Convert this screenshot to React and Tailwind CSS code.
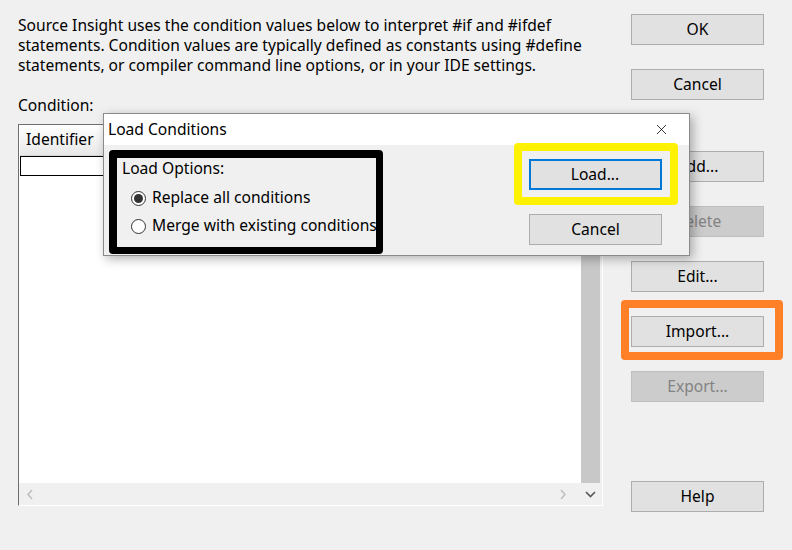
import { X } from 'lucide-react'

const Btn = ({ children, disabled, focused, className = '' }) => (
  <div
    className={
      'h-[31px] w-[133px] flex items-center justify-center border leading-none ' +
      (disabled
        ? 'bg-[#cccccc] border-[#bfbfbf] text-[#838383] '
        : focused
          ? 'bg-[#e1e1e1] border-2 border-[#0078d7] text-black '
          : 'bg-[#e1e1e1] border-[#adadad] text-black ') +
      className
    }
  >
    <span>{children}</span>
  </div>
)

const Radio = ({ checked, label }) => (
  <div className="flex items-center h-[20px] pl-[14px]">
    <div className="w-[15px] h-[15px] shrink-0 rounded-full border border-[#333] bg-white flex items-center justify-center">
      {checked && <div className="w-[9px] h-[9px] rounded-full bg-[#333]" />}
    </div>
    <span className="ml-[6px] whitespace-nowrap">{label}</span>
  </div>
)

const LoadDialog = () => (
  <div className="absolute left-[103px] top-[113px] w-[587px] h-[143px] border border-[#8a8a8a] bg-[#f0f0f0] shadow-[3px_3px_10px_rgba(0,0,0,0.3)] flex flex-col">
    <div className="h-[31px] bg-white flex items-center justify-between pl-[4px] pr-[19px]">
      <span>Load Conditions</span>
      <X size={17} strokeWidth={1.1} className="text-black" />
    </div>
    <div className="flex-1 flex relative">
      <div className="ml-[5px] mt-[5px] mb-[1px] w-[274px] border-[7px] border-l-[8px] border-t-[8px] border-black rounded-[4px] bg-[#f0f0f0] overflow-hidden">
        <div className="pl-[5px] leading-[20px]">Load Options:</div>
        <div className="mt-[10px]">
          <Radio checked label="Replace all conditions" />
        </div>
        <div className="mt-[8px]">
          <Radio label="Merge with existing conditions" />
        </div>
      </div>
      <div className="ml-auto mr-[11px] -mt-[2px] flex flex-col items-center w-[165px]">
        <div className="border-[8px] border-[#fff200] rounded-[4px] pl-[7px] pr-[8px] pt-[8px] pb-[7px] bg-[#f0f0f0]">
          <Btn focused>Load...</Btn>
        </div>
        <Btn className="mt-[9px]">Cancel</Btn>
      </div>
    </div>
  </div>
)

const ListBox = () => (
  <div className="mt-[9px] w-[585px] h-[382px] border-l border-t border-[#6e6e6e] border-r border-b border-r-white border-b-white flex flex-col">
    <div className="flex-1 flex min-h-0">
      <div className="flex-1 bg-white flex flex-col pl-[1px]">
        <div className="h-[31px] bg-gradient-to-b from-white to-[#e8e8e8] border-b border-[#d5d5d5] flex items-center pl-[6px]">
          <span>Identifier</span>
        </div>
        <div className="h-[20px] border border-black" />
      </div>
      <div className="w-[19px] bg-[#c8c8c8] mr-[2px]" />
    </div>
    <div className="h-[22px] flex">
      <div className="flex-1 bg-[#f0f0f0] flex items-center justify-between pl-[6px] pr-[13px] ml-[1px]">
        <svg width="8" height="11" viewBox="0 0 8 11">
          <path d="M6 1 L2 5.5 L6 10" fill="none" stroke="#c0c0c0" strokeWidth="1.6" />
        </svg>
        <svg width="8" height="11" viewBox="0 0 8 11">
          <path d="M2 1 L6 5.5 L2 10" fill="none" stroke="#c0c0c0" strokeWidth="1.6" />
        </svg>
      </div>
      <div className="w-[19px] bg-[#f0f0f0] ml-[1px] mr-[2px] flex items-center justify-center">
        <svg width="11" height="7" viewBox="0 0 11 7">
          <path d="M1 1 L5.5 5.5 L10 1" fill="none" stroke="#5a5a5a" strokeWidth="1.7" />
        </svg>
      </div>
    </div>
  </div>
)

export default function App() {
  return (
    <div className="w-[792px] h-[550px] bg-[#f0f0f0] relative overflow-hidden font-['Noto_Sans',sans-serif] text-[15.6px] text-black">
      <div className="flex">
        <div className="pl-[18px] pt-[15px] w-[613px]">
          <p className="leading-[20px] whitespace-nowrap">
            Source Insight uses the condition values below to interpret #if and #ifdef
            <br />
            statements. Condition values are typically defined as constants using #define
            <br />
            statements, or compiler command line options, or in your IDE settings.
          </p>
          <div className="mt-[20px] leading-[20px]">Condition:</div>
          <ListBox />
        </div>
        <div className="ml-[18px] pt-[14px] flex flex-col">
          <Btn>OK</Btn>
          <Btn className="mt-[24px]">Cancel</Btn>
          <Btn className="mt-[51px]">Add...</Btn>
          <Btn disabled className="mt-[24px]">Delete</Btn>
          <Btn className="mt-[24px]">Edit...</Btn>
          <Btn className="mt-[24px]">Import...</Btn>
          <Btn disabled className="mt-[24px]">Export...</Btn>
          <Btn className="mt-[79px]">Help</Btn>
        </div>
      </div>
      <div className="absolute left-[621px] top-[300px] w-[162px] h-[60px] border-[8px] border-[#ff8027] rounded-[4px]" />
      <LoadDialog />
    </div>
  )
}
